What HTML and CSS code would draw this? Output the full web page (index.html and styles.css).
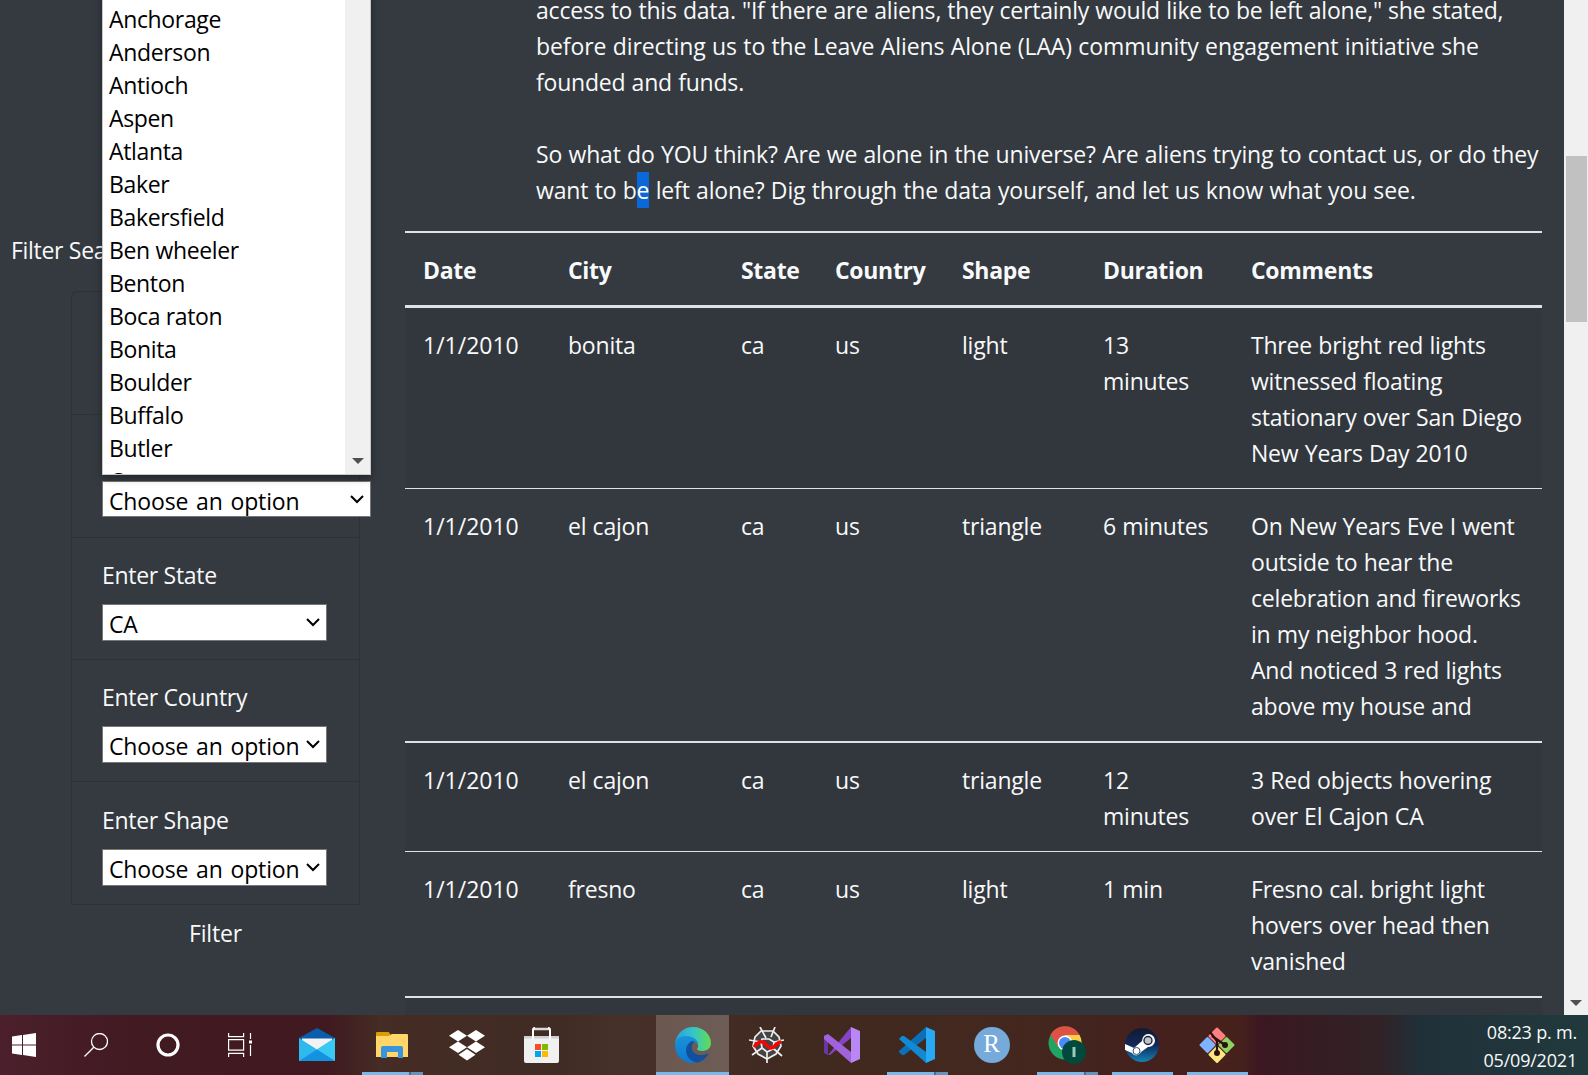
FILE: index.html
```html
<!DOCTYPE html>
<html lang="en">
<head>
<meta charset="utf-8">
<title>UFO Sightings</title>
<link rel="stylesheet" href="styles.css">
</head>
<body>
<div class="screen">
<div class="browser">
  <aside class="sidebar">
    <p class="side-title">Filter Sea</p>
    <ul class="filters">
      <li class="filter"></li>
      <li class="filter city">
        <div class="select open"><span>Choose an option</span><svg class="chev" viewBox="0 0 14 9"><path d="M1 1l6 6 6-6"/></svg>
          <div class="popup">
            <div class="options"><div>Anchorage</div><div>Anderson</div><div>Antioch</div><div>Aspen</div><div>Atlanta</div><div>Baker</div><div>Bakersfield</div><div>Ben wheeler</div><div>Benton</div><div>Boca raton</div><div>Bonita</div><div>Boulder</div><div>Buffalo</div><div>Butler</div><div>Canaan</div></div>
            <div class="popup-bar"><i class="down"></i></div>
          </div>
        </div></li>
      <li class="filter"><label>Enter State</label><div class="select"><span>CA</span><svg class="chev" viewBox="0 0 14 9"><path d="M1 1l6 6 6-6"/></svg></div></li>
      <li class="filter"><label>Enter Country</label><div class="select"><span>Choose an option</span><svg class="chev" viewBox="0 0 14 9"><path d="M1 1l6 6 6-6"/></svg></div></li>
      <li class="filter"><label>Enter Shape</label><div class="select"><span>Choose an option</span><svg class="chev" viewBox="0 0 14 9"><path d="M1 1l6 6 6-6"/></svg></div></li>
    </ul>
    <div class="go">Filter</div>
  </aside>
  <main class="content">
    <div class="story">
      <p>access to this data. "If there are aliens, they certainly would like to be left alone," she stated,<br><span class="wider">before directing us to the Leave Aliens Alone (LAA) community engagement initiative she</span><br>founded and funds.</p>
      <p class="wide">So what do YOU think? Are we alone in the universe? Are aliens trying to contact us, or do they<br>want to b<mark>e</mark> left alone? Dig through the data yourself, and let us know what you see.</p>
    </div>
    <div class="table">
      <div class="row head"><b>Date</b><b>City</b><b>State</b><b>Country</b><b>Shape</b><b>Duration</b><b>Comments</b></div>
      <div class="row odd r1"><span>1/1/2010</span><span>bonita</span><span>ca</span><span>us</span><span>light</span><span>13<br>minutes</span><span>Three bright red lights<br>witnessed floating<br>stationary over San Diego<br>New Years Day 2010</span></div>
      <div class="row thin"><span>1/1/2010</span><span>el cajon</span><span>ca</span><span>us</span><span>triangle</span><span>6 minutes</span><span>On New Years Eve I went<br>outside to hear the<br>celebration and fireworks<br>in my neighbor hood.<br>And noticed 3 red lights<br>above my house and</span></div>
      <div class="row odd thick"><span>1/1/2010</span><span>el cajon</span><span>ca</span><span>us</span><span>triangle</span><span>12<br>minutes</span><span>3 Red objects hovering<br>over El Cajon CA</span></div>
      <div class="row thin"><span>1/1/2010</span><span>fresno</span><span>ca</span><span>us</span><span>light</span><span>1 min</span><span>Fresno cal. bright light<br>hovers over head then<br>vanished</span></div>
      <div class="row odd thick last"></div>
    </div>
  </main>
  <div class="scrollbar"><div class="thumb"></div><i class="down"></i></div>
</div>
<footer class="taskbar">
  <div class="task start"><svg width="24" height="24" viewBox="0 0 24 24"><path fill="#fff" d="M0 3.4L10 2v9.5H0zM11 1.900L24 0v11.500H11zM0 12.500h10V22L0 20.600zM11 12.500h13V24l-13-1.900z"/></svg></div>
  <div class="task find"><svg width="24" height="24" viewBox="0 0 24 24" fill="none" stroke="#fff" stroke-width="1.300"><circle cx="15.500" cy="8.500" r="8"/><path d="M9.800 14.200L.5 23.500"/></svg></div>
  <div class="task cortana"><svg width="24" height="24" viewBox="0 0 24 24"><circle cx="12" cy="12" r="10" fill="none" stroke="#fff" stroke-width="3.200"/></svg></div>
  <div class="task view"><svg width="24" height="24" viewBox="0 0 24 24" fill="none" stroke="#fff" stroke-width="1.200"><path d="M.6 0v3.600h15V0M.6 6.600h15v10.500H.6zM.6 24v-3.600h15V24M22.500 0v6M22.500 12v11"/><path fill="#fff" stroke="none" d="M21 7.500h3v3h-3z"/></svg></div>
  <div class="task mail"><svg width="36" height="34" viewBox="0 0 36 34"><path fill="#0a5cad" d="M0 10L18 0l18 10v10H0z"/><path fill="#f3f3f3" d="M3 10.500h30V22H3z"/><path fill="#2fb9ee" d="M0 10l18 11.500L36 10v23H0z"/><path fill="#38c9f5" d="M36 10v23L18 21.500z"/><path fill="#1492df" d="M0 33l18-11.500L36 33z"/></svg></div>
  <div class="task files"><svg width="32" height="27" viewBox="0 0 32 27"><path fill="#ffd667" d="M0 3h14l2-1h15q1 0 1 1v22H0z"/><path fill="#dc9c04" d="M0 1q0-1 1-1h11q1 0 1.500 1l1 1.500L13 4H0z"/><path fill="#3994dc" d="M5 26V16q0-2 2-2h18q2 0 2 2v10h-5v-6H11v6z"/></svg><u class="run split"></u></div>
  <div class="task dropbox"><svg width="36" height="31" viewBox="0 0 36 31"><path fill="#fff" d="M9 0l9 5.700-9 5.800-9-5.800zM27 0l9 5.700-9 5.800-9-5.800zM9 11.500l9 5.800-9 5.700-9-5.700zM27 11.500l9 5.800-9 5.700-9-5.700zM18 19l8.500 5.700L18 30.500l-8.500-5.800z"/></svg></div>
  <div class="task store"><svg width="35" height="36" viewBox="0 0 35 36"><path fill="#f0f0f0" d="M0 9h35v25q0 2-2 2H2q-2 0-2-2z"/><path fill="#cfcfcf" d="M0 9h35v2.500H0z"/><path fill="none" stroke="#d8dadb" stroke-width="2.500" d="M10 2h15"/><path fill="none" stroke="#fff" stroke-width="2" d="M9 12V3q0-2 2-2M24 1q2 0 2 2v9"/><path fill="#f25022" d="M11 17h6v6h-6z"/><path fill="#7fba00" d="M18 17h6v6h-6z"/><path fill="#00a4ef" d="M11 24h6v6h-6z"/><path fill="#ffb900" d="M18 24h6v6h-6z"/></svg></div>
  <div class="task edge"><svg width="36" height="36" viewBox="0 0 36 36"><defs><linearGradient id="eg"><stop offset="0" stop-color="#2a9fdf"/><stop offset=".5" stop-color="#34c5c9"/><stop offset="1" stop-color="#62dc52"/></linearGradient><linearGradient id="eb" x2="0" y2="1"><stop offset="0" stop-color="#1a92d8"/><stop offset="1" stop-color="#0c78d3"/></linearGradient></defs><path fill="url(#eg)" d="M0 16C2 6 9 0 18 0c11 0 18 8 18 16 0 6-5 8-9 8-3 0-5-1-5-2 2-2 2-7-4-8z"/><path fill="url(#eb)" d="M0 18C0 11 6 9 11 9c7 0 12 4 12 8-5-4-9 0-9 5 0 6 4 11 8 13.500C9 38 0 29 0 18z"/><path fill="#124f9f" d="M17 14c-9 4-8 19 5 21.500 5-1 9-4 11-8 .5-1-.3-1.300-1-.8-8 4-17-1-15-8 .4-1.500 1.200-3 2.500-4.200z"/></svg><u class="run"></u></div>
  <div class="task spyder"><svg width="36" height="36" viewBox="0 0 36 36" fill="none" stroke="#eee" stroke-width="1.700"><path fill="#444" d="M12 4h12l6 6 2 9-5 8-9 5-9-5-5-8 2-9z"/><path d="M17 11L11 0M22 10L26 0M25 15l10-2M25 22l8 7M18 25v11M13 21L3 28M12 15L0 13M13 12h7l5 3-1 7-6 3-5-4-1-6z"/><path stroke="#f00" stroke-width="3.500" d="M5 20q5-6 8-5c4 0 5 6 9 6s5-6 10-6"/></svg></div>
  <div class="task vs"><svg width="36" height="36" viewBox="0 0 36 36"><path fill="#6a35a5" d="M0 9l4-2v21l-4-2z"/><path fill="#8543c5" d="M4 28L27 0v11L6 28z"/><path fill="#a063db" d="M0 9l4-2 23 18v11L0 12z"/><path fill="#b987f3" d="M27 0l9 4v28l-9 4z"/></svg></div>
  <div class="task code"><svg width="36" height="36" viewBox="0 0 36 36"><path fill="#0c70b8" d="M0 24l27-24v11L5 28H3l-3-3z"/><path fill="#1189d3" d="M0 12l3-3h2l22 16v11L0 12z"/><path fill="#29a9f3" d="M27 0l9 4v28l-9 4z"/></svg><u class="run split"></u></div>
  <div class="task rstudio"><span class="r-logo">R</span></div>
  <div class="task chrome"><svg width="38" height="38" viewBox="0 0 38 38"><circle cx="17" cy="17" r="16.500" fill="#1fa463"/><path fill="#de5246" d="M2.500 9A16.500 16.500 0 0 1 31.500 9H17l-7 12z"/><path fill="#ffce44" d="M17 9h14.500A16.500 16.500 0 0 1 17 33.500L24 21z"/><circle cx="17" cy="17" r="7.500" fill="#fff"/><circle cx="17" cy="17" r="6" fill="#4c8bf5"/><circle cx="26" cy="26" r="12" fill="#02493d"/><path fill="#9cb" d="M24.500 21h3v10h-3z"/></svg><u class="run split"></u></div>
  <div class="task steam"><svg width="34" height="34" viewBox="0 0 34 34"><defs><linearGradient id="sg" x2="0" y2="1"><stop offset="0" stop-color="#111a2e"/><stop offset=".5" stop-color="#12285a"/><stop offset="1" stop-color="#1284b4"/></linearGradient></defs><circle cx="17" cy="17" r="17" fill="url(#sg)"/><path fill="#fff" d="M0 16l9 4 8-7a6.500 6.500 0 1 1 6 6l-7 5a5 5 0 0 1-9 1l-7-3z"/><circle cx="23" cy="12.500" r="4" fill="#c5c3c0" stroke="#172448" stroke-width="1.400"/><circle cx="11.500" cy="23" r="3.500" fill="none" stroke="#355078"/></svg><u class="run"></u></div>
  <div class="task git"><svg width="36" height="36" viewBox="0 0 36 36" stroke-linejoin="round" stroke-width="2"><path fill="#ff7f82" stroke="#ff7f82" d="M18 1.500l7.500 7.500-7.500 7.500L10.500 9z"/><path fill="#80b3ff" stroke="#80b3ff" d="M8.500 11l7 7-7 7-7-7z"/><path fill="#8dd35f" stroke="#8dd35f" d="M27.500 11l7 7-7 7-7-7z"/><path fill="#ffe680" stroke="#ffe680" d="M18 20l7.500 7.500L18 35l-7.500-7.500z"/><path fill="none" stroke="#2b1210" stroke-width="2.200" d="M11 5l7 9v12M13 9l13 9"/><circle cx="18" cy="26" r="3" fill="#2b1210"/><circle cx="26" cy="18" r="3" fill="#2b1210"/></svg><u class="run"></u></div>
  <div class="clock"><div>08:23 p. m.</div><div>05/09/2021</div></div>
</footer>
</div>
</body>
</html>
```
FILE: styles.css
```css
* { box-sizing: border-box; }
body { margin: 0; background: #343a40; color: #f8f9fa; font: 23px/36px "Open Sans", "Noto Sans", sans-serif; letter-spacing: -0.2px; }
p, ul { margin: 0; padding: 0; }
.screen { width: 1588px; height: 1075px; overflow: hidden; display: flex; flex-direction: column; }
.browser { height: 1015px; display: flex; overflow: hidden; }
.sidebar { width: 405px; padding: 232px 0 0 11px; white-space: nowrap; letter-spacing: -0.3px; }
.side-title { margin-bottom: 23px; }
.filters { list-style: none; margin-left: 60px; width: 289px; border: 1px solid #2d3238; border-top: 0; border-radius: 6px 6px 0 0; }
.filter { height: 122px; border-top: 1px solid #2d3238; padding: 19px 30px 17px; display: flex; flex-direction: column; gap: 11px; align-items: flex-start; }
.filter:first-child { height: 123px; border-radius: 6px 6px 0 0; }
.filter:nth-child(2) { height: 123px; }
.filter:nth-child(5) { height: 123px; padding-top: 20px; }
.filter.city { padding-top: 66px; }
.select { position: relative; flex: none; width: 225px; height: 37px; background: #fff; border: 1px solid #767676; color: #000; padding: 0 6px 0 6px; display: flex; justify-content: space-between; line-height: 38px; word-spacing: 2px; letter-spacing: -0.15px; }
.select.open { width: 269px; height: 36px; }
.chev { width: 14px; height: 9px; margin-top: 13px; fill: none; stroke: #000; stroke-width: 2; }
.popup { position: absolute; left: -1px; bottom: 41px; width: 269px; height: 500px; background: #fff; border: 1px solid #c8c8c8; display: flex; justify-content: space-between; align-items: flex-end; box-shadow: 0 3px 8px rgba(0,0,0,.35); overflow: hidden; letter-spacing: -0.35px; word-spacing: 0; }
.options { padding-left: 6px; line-height: 33px; height: 471px; overflow: hidden; }
.popup-bar { width: 25px; height: 100%; background: #f0f0f0; display: flex; align-items: flex-end; justify-content: center; padding-bottom: 10px; }
.down { border: 6px solid transparent; border-top-color: #505050; border-bottom: 0; }
.go { width: 289px; margin: 10px 0 0 60px; text-align: center; letter-spacing: -0.2px; }
.content { width: 1138px; }
.story { margin: -8px 0 23px 131px; white-space: nowrap; word-spacing: .4px; }
.story p + p { margin-top: 36px; }
.wide { letter-spacing: -0.13px; }
.wider { letter-spacing: -0.08px; }
mark { background: #0a68d8; color: #fff; display: inline-block; }
.table { width: 1137px; }
.row { display: grid; grid-template-columns: 145px 173px 94px 127px 141px 148px 309px; padding: 19px 0 17px; white-space: nowrap; word-spacing: .5px; }
.row > * { padding-left: 18px; }
.row > span:first-child { letter-spacing: 0; }
.head { border-top: 2px solid #dee2e6; border-bottom: 3px solid #dee2e6; letter-spacing: -0.3px; }
.odd { background: #32373d; }
.thin { border-top: 1px solid #dee2e6; }
.thick { border-top: 2px solid #dee2e6; }
.last { height: 60px; }
.scrollbar { width: 24px; margin-left: 21px; background: #f0f0f0; display: flex; flex-direction: column; align-items: center; justify-content: space-between; padding: 156px 0 9px; }
.thumb { width: 21px; height: 166px; background: #c1c1c1; }
.taskbar { height: 60px; position: relative; display: flex; background: linear-gradient(90deg, #4b202c 0, #421a22 130px, #401a20 330px, #452c24 380px, #402c25 560px, #46302a 620px, #40291f 800px, #43281f 1000px, #44211e 1150px, #46211c 1240px, #3b1822 1260px, #302226 1380px, #203039 1420px, #213a3d 1588px); }
.task { position: relative; width: 75px; flex: none; display: flex; align-items: center; justify-content: center; }
.start { width: 48px; }
.find { width: 96px; }
.cortana { width: 48px; }
.view { width: 96px; }
.mail { width: 58px; }
.files { width: 91px; }
.dropbox { width: 60px; }
.store { width: 89px; }
.edge { width: 73px; margin-left: 70px; background: linear-gradient(90deg, #6b5850, #6d5d56); }
.run { position: absolute; bottom: 0; left: 8px; right: 6px; height: 3px; background: #76b9ed; }
.edge .run { left: 0; right: 0; }
.files .run { left: 16px; right: 14px; }
.split { background: linear-gradient(90deg, #76b9ed 47px, #48708e 47px 49px, #6195c0 49px); }
.r-logo { width: 36px; height: 36px; border-radius: 50%; background: #75aadb; color: #fff; font: 25px/34px "Liberation Serif", serif; text-align: center; }
.clock { flex: 1; padding: 3px 11px 0 0; text-align: right; font-size: 18px; line-height: 28px; white-space: nowrap; }
```
